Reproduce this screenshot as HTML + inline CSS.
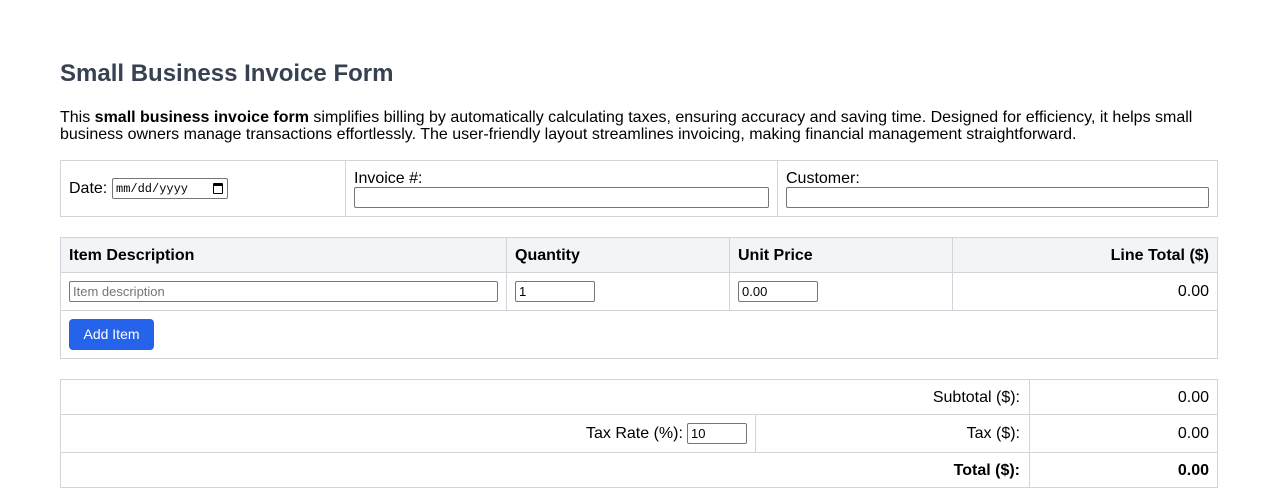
<!DOCTYPE html>
<html><head><style>
*{box-sizing:border-box}
body{margin:0;width:1278px;height:501px;background:#fff;font-family:"Liberation Sans",Arial,sans-serif;font-size:16px;color:#000;position:relative;overflow:hidden}
.a{position:absolute}
.b{position:absolute;border:1px solid #d1d5db}
.h{position:absolute;height:1px;background:#d1d5db}
.v{position:absolute;width:1px;background:#d1d5db}
.in{position:absolute;border:1px solid #767676;border-radius:2px;height:21px;background:#fff;font-size:13px;padding:2px 3px;font-family:"Liberation Sans",Arial,sans-serif}
.t{position:absolute;white-space:nowrap}
</style></head><body>
<div class="t" style="left:60px;top:60px;font-size:24px;font-weight:bold;color:#374151">Small Business Invoice Form</div>
<div class="a" style="left:60px;top:109px;width:1150px;line-height:17px;font-size:16px">This <b>small business invoice form</b> simplifies billing by automatically calculating taxes, ensuring accuracy and saving time. Designed for efficiency, it helps small business owners manage transactions effortlessly. The user-friendly layout streamlines invoicing, making financial management straightforward.</div>

<div class="b" style="left:60px;top:160px;width:1158px;height:57px"></div>
<div class="v" style="left:345px;top:160px;height:57px"></div>
<div class="v" style="left:777px;top:160px;height:57px"></div>
<div class="t" style="left:69px;top:180px">Date:</div>
<div class="in" style="left:112px;top:178px;width:116px;font-family:'Liberation Mono',monospace;font-size:12px;padding-top:3px">mm/dd/yyyy <span style="position:absolute;left:100px;top:4px;width:10px;height:11px;border:1.5px solid #000;border-top-width:3px;border-radius:1px"></span></div>
<div class="t" style="left:354px;top:170px">Invoice #:</div>
<div class="in" style="left:354px;top:187px;width:415px"></div>
<div class="t" style="left:786px;top:170px">Customer:</div>
<div class="in" style="left:786px;top:187px;width:423px"></div>

<div class="b" style="left:60px;top:237px;width:1158px;height:122px"></div>
<div class="a" style="left:61px;top:238px;width:1156px;height:34px;background:#f3f4f6"></div>
<div class="h" style="left:60px;top:272px;width:1158px"></div>
<div class="h" style="left:60px;top:310px;width:1158px"></div>
<div class="v" style="left:506px;top:237px;height:73px"></div>
<div class="v" style="left:729px;top:237px;height:73px"></div>
<div class="v" style="left:952px;top:237px;height:73px"></div>
<div class="t" style="left:69px;top:247px;font-weight:bold">Item Description</div>
<div class="t" style="left:515px;top:247px;font-weight:bold">Quantity</div>
<div class="t" style="left:738px;top:247px;font-weight:bold">Unit Price</div>
<div class="t" style="right:69px;top:247px;font-weight:bold">Line Total ($)</div>
<div class="in" style="left:69px;top:281px;width:429px;color:#757575">Item description</div>
<div class="in" style="left:515px;top:281px;width:80px">1</div>
<div class="in" style="left:738px;top:281px;width:80px">0.00</div>
<div class="t" style="right:69px;top:283px">0.00</div>
<div class="a" style="left:69px;top:319px;width:85px;height:31px;background:#2563eb;border-radius:4px;color:#fff;font-size:14px;text-align:center;line-height:31px">Add Item</div>

<div class="b" style="left:60px;top:379px;width:1158px;height:109px"></div>
<div class="h" style="left:60px;top:414px;width:1158px"></div>
<div class="h" style="left:60px;top:452px;width:1158px"></div>
<div class="v" style="left:1029px;top:379px;height:109px"></div>
<div class="v" style="left:755px;top:414px;height:38px"></div>
<div class="t" style="right:258px;top:389px">Subtotal ($):</div>
<div class="t" style="right:69px;top:389px">0.00</div>
<div class="t" style="left:586px;top:425px">Tax Rate (%):</div>
<div class="in" style="left:687px;top:423px;width:60px">10</div>
<div class="t" style="right:258px;top:425px">Tax ($):</div>
<div class="t" style="right:69px;top:425px">0.00</div>
<div class="t" style="right:258px;top:462px;font-weight:bold">Total ($):</div>
<div class="t" style="right:69px;top:462px;font-weight:bold">0.00</div>
</body></html>
